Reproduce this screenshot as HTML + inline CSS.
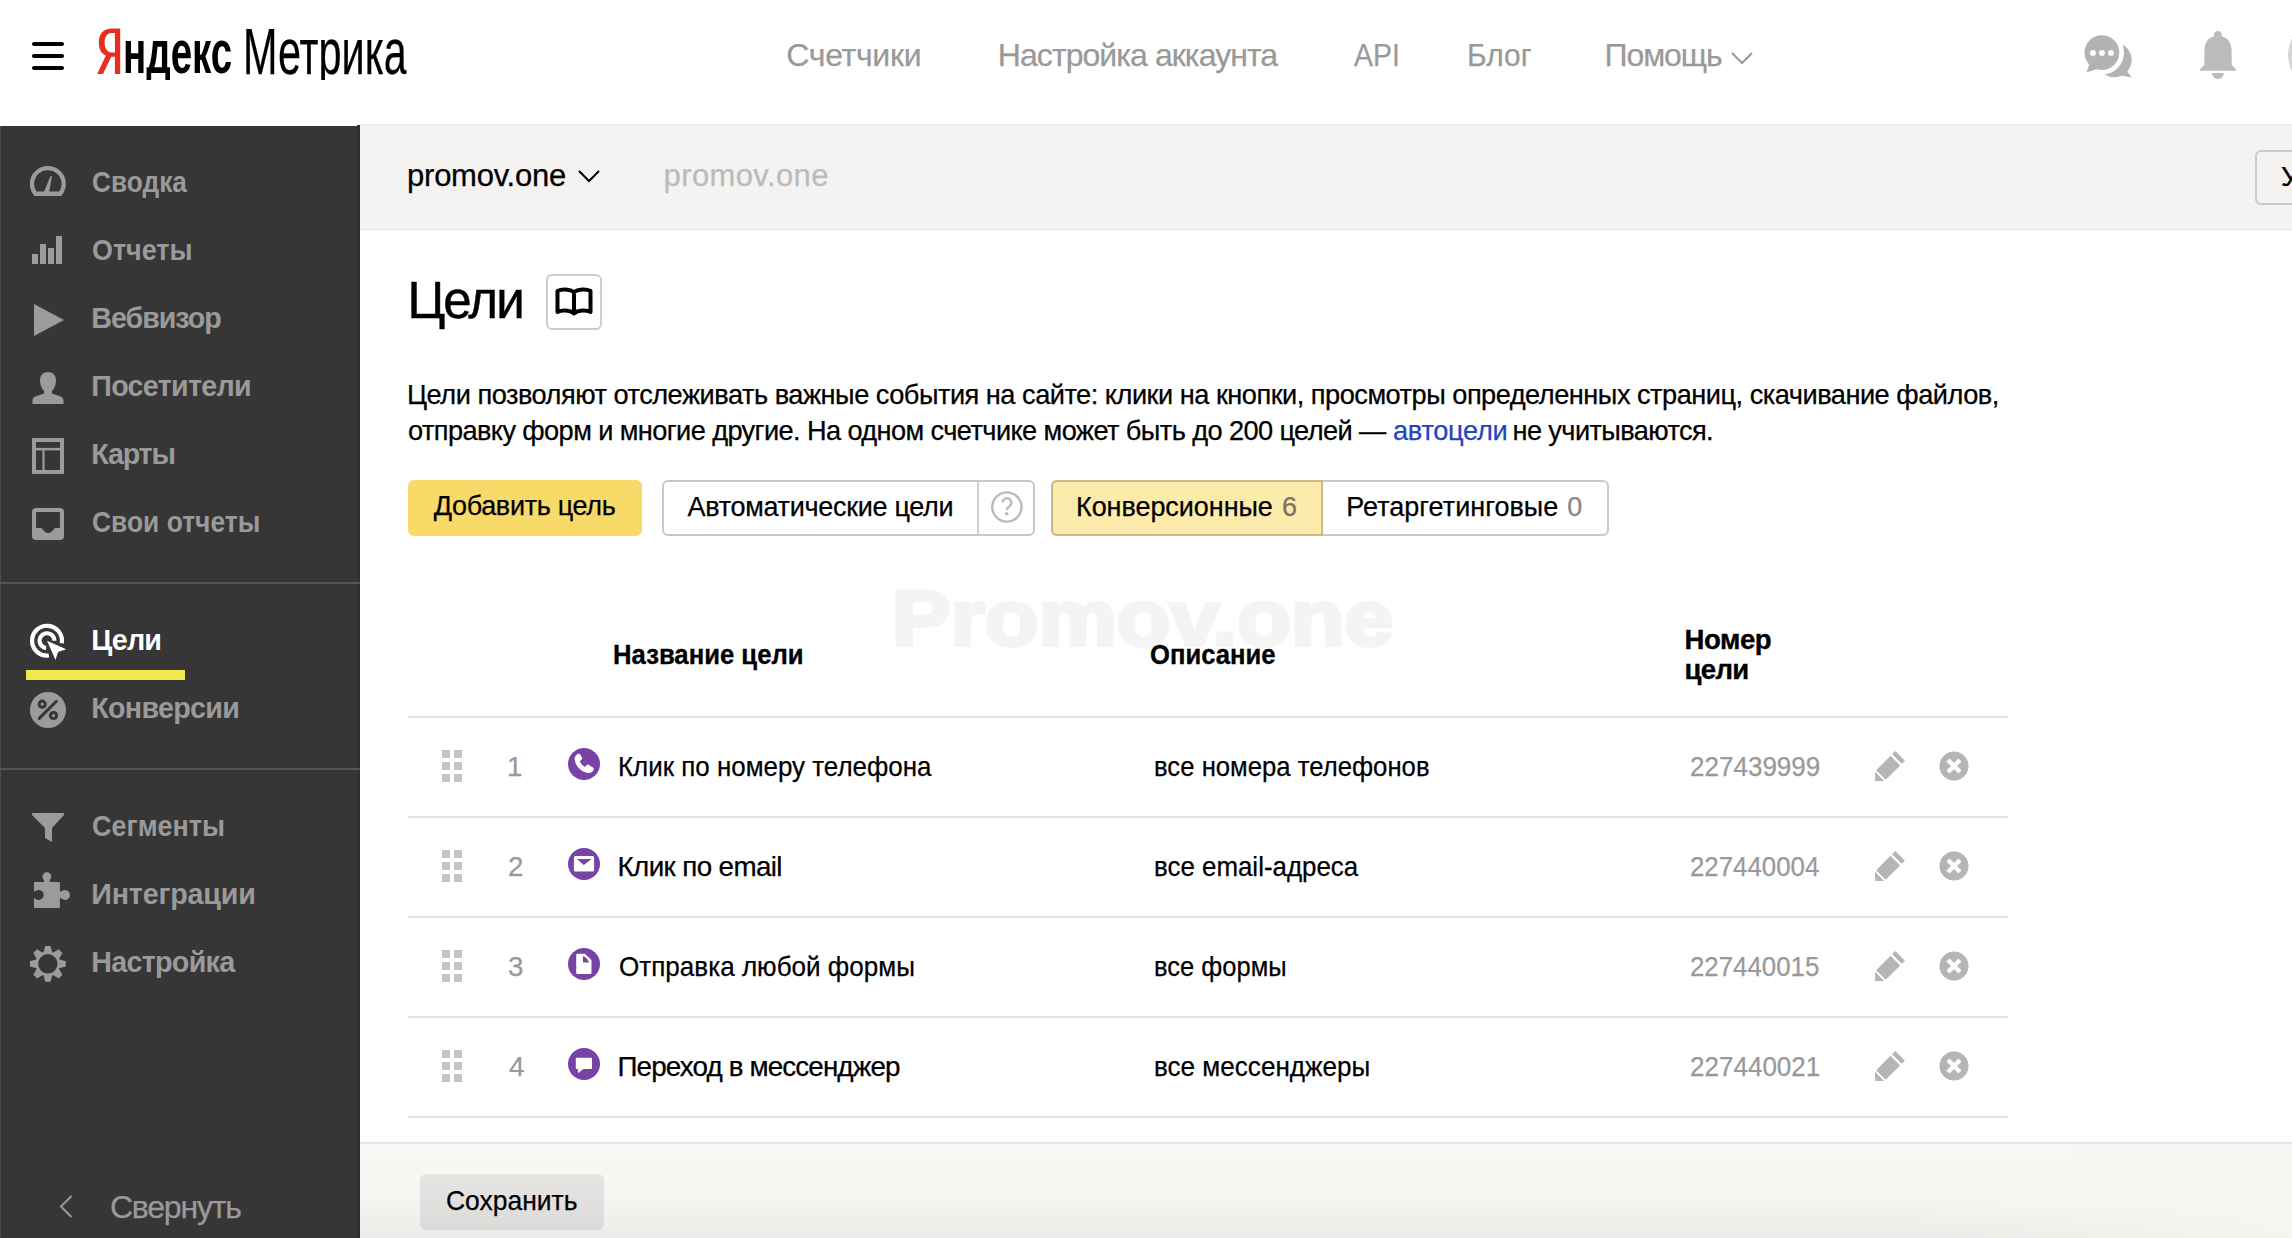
<!DOCTYPE html>
<html><head><meta charset="utf-8">
<style>
*{margin:0;padding:0;box-sizing:border-box}
html,body{width:2292px;height:1238px;overflow:hidden;background:#fff;font-family:"Liberation Sans",sans-serif;color:#000}
.a{position:absolute}
.t{position:absolute;white-space:nowrap;line-height:1;transform-origin:0 0}
svg{position:absolute;overflow:visible}
</style></head><body>
<div class="a" style="left:0;top:0;width:2292px;height:125px;background:#fff"></div>
<div class="a" style="left:0;top:126px;width:360px;height:1112px;background:#363636"></div>
<div class="a" style="left:360px;top:124px;width:1932px;height:106px;background:#f4f3f1;border-top:1px solid #ecebe8;border-bottom:1px solid #e8e7e4"></div>
<div class="a" style="left:360px;top:1142px;width:1932px;height:96px;background:linear-gradient(90deg,rgba(247,246,242,0) 80%,rgba(247,246,242,0.85) 100%),linear-gradient(#f8f7f3 0%,#f7f6f2 55%,#ebeae8 100%);border-top:2px solid #e6e5e2"></div>
<div class="a" style="left:32px;top:42px;width:32px;height:4px;border-radius:2px;background:#000"></div>
<div class="a" style="left:32px;top:54px;width:32px;height:4px;border-radius:2px;background:#000"></div>
<div class="a" style="left:32px;top:66px;width:32px;height:4px;border-radius:2px;background:#000"></div>
<svg style="left:0;top:0" width="130" height="80" viewBox="0 0 130 80"><path fill="#e52e1f" fill-rule="evenodd" d="M120.2 28.5 L120.2 74 L114.9 74 L114.9 56.8 L111.2 56.8 L103 74 L97.2 74 L105.9 55.6 C101.2 53.6 98.8 49.2 98.8 42.6 C98.8 33.2 104.2 28.5 111.5 28.5 Z M114.9 32.9 L111.6 32.9 C107.4 32.9 104.6 36.2 104.6 42.6 C104.6 49 107.4 52.4 111.6 52.4 L114.9 52.4 Z"/></svg>
<div class="t" style="left:123.08px;top:22.35px;font-size:61px;color:#000;font-weight:bold;transform:scaleX(0.6310);clip-path:inset(0 0 3.4px 0);">ндекс</div>
<div class="t" style="left:242.77px;top:19.81px;font-size:64px;color:#000;-webkit-text-stroke:0.25px currentColor;transform:scaleX(0.6466);clip-path:inset(0 0 3.8px 0);">Метрика</div>
<div class="t" style="left:786.30px;top:38.91px;font-size:32px;color:#999;-webkit-text-stroke:0.25px currentColor;letter-spacing:-0.29px;">Счетчики</div>
<div class="t" style="left:997.80px;top:38.91px;font-size:32px;color:#999;-webkit-text-stroke:0.25px currentColor;letter-spacing:-0.93px;">Настройка аккаунта</div>
<div class="t" style="left:1353.70px;top:38.91px;font-size:32px;color:#999;-webkit-text-stroke:0.25px currentColor;transform:scaleX(0.8878);">API</div>
<div class="t" style="left:1466.93px;top:38.91px;font-size:32px;color:#999;-webkit-text-stroke:0.25px currentColor;transform:scaleX(0.9358);">Блог</div>
<div class="t" style="left:1604.60px;top:38.91px;font-size:32px;color:#999;-webkit-text-stroke:0.25px currentColor;letter-spacing:-1.12px;">Помощь</div>
<svg style="left:1731px;top:52px" width="22" height="12" viewBox="0 0 22 12"><path d="M1 1 L11 11 L21 1" fill="none" stroke="#999" stroke-width="2"/></svg>
<svg style="left:2076px;top:26px" width="64" height="60" viewBox="0 0 64 60">
<circle cx="38.5" cy="34" r="17.2" fill="#b3b3b3"/>
<path d="M50 44 L55.9 51.6 L45 49.5 Z" fill="#b3b3b3"/>
<circle cx="25.9" cy="26.6" r="22.1" fill="#fff"/>
<circle cx="25.9" cy="26.6" r="17.4" fill="#b3b3b3"/>
<path d="M13.5 37.5 L10.6 45.9 C14.5 45.6 18 44.5 22 42.5 Z" fill="#b3b3b3"/>
<circle cx="17" cy="26.9" r="2.9" fill="#fff"/><circle cx="26" cy="26.9" r="2.9" fill="#fff"/><circle cx="34.9" cy="26.9" r="2.9" fill="#fff"/>
</svg>
<svg style="left:2190px;top:24px" width="56" height="62" viewBox="0 0 56 62">
<circle cx="27.9" cy="10.8" r="3.9" fill="#bbb"/>
<path d="M28 12 C19 12 14.8 17.5 14.4 26 L14.3 41.1 L10 45.3 L10 46.8 L45.8 46.8 L45.8 45.3 L41.7 41.1 L41.6 26 C41.2 17.5 37 12 28 12 Z" fill="#bbb"/>
<path d="M22 49.1 L33.8 49.1 A5.9 5.8 0 0 1 22 49.1 Z" fill="#bbb"/>
</svg>
<div class="a" style="left:2288px;top:17px;width:76px;height:76px;border-radius:50%;background:#d6d6d6"></div>
<div class="t" style="left:407.10px;top:159.85px;font-size:31px;color:#000;-webkit-text-stroke:0.25px currentColor;letter-spacing:-0.26px;">promov.one</div>
<svg style="left:578px;top:170px" width="22" height="12" viewBox="0 0 22 12"><path d="M1 1 L11 11 L21 1" fill="none" stroke="#000" stroke-width="2"/></svg>
<div class="t" style="left:663.60px;top:159.85px;font-size:31px;color:#bbb;-webkit-text-stroke:0.25px currentColor;letter-spacing:0.38px;">promov.one</div>
<div class="a" style="left:2255px;top:150px;width:60px;height:55px;border:2px solid #c9c9c9;border-radius:6px;background:transparent"></div>
<div class="t" style="left:2281.00px;top:161.57px;font-size:28.5px;color:#000;-webkit-text-stroke:0.25px currentColor;">У</div>
<div class="t" style="left:92.38px;top:167.80px;font-size:28.7px;color:#9a9a9a;font-weight:bold;transform:scaleX(0.9155);">Сводка</div>
<div class="t" style="left:92.36px;top:236.00px;font-size:28.7px;color:#9a9a9a;font-weight:bold;transform:scaleX(0.9381);">Отчеты</div>
<div class="t" style="left:91.30px;top:303.90px;font-size:28.7px;color:#9a9a9a;font-weight:bold;letter-spacing:-1.06px;">Вебвизор</div>
<div class="t" style="left:91.30px;top:371.50px;font-size:28.7px;color:#9a9a9a;font-weight:bold;letter-spacing:-0.72px;">Посетители</div>
<div class="t" style="left:91.30px;top:439.70px;font-size:28.7px;color:#9a9a9a;font-weight:bold;letter-spacing:-1.23px;">Карты</div>
<div class="t" style="left:92.38px;top:507.60px;font-size:28.7px;color:#9a9a9a;font-weight:bold;transform:scaleX(0.9206);">Свои отчеты</div>
<div class="t" style="left:91.30px;top:693.50px;font-size:28.7px;color:#9a9a9a;font-weight:bold;letter-spacing:-0.73px;">Конверсии</div>
<div class="t" style="left:92.36px;top:811.70px;font-size:28.7px;color:#9a9a9a;font-weight:bold;transform:scaleX(0.9388);">Сегменты</div>
<div class="t" style="left:91.30px;top:880.00px;font-size:28.7px;color:#9a9a9a;font-weight:bold;letter-spacing:-0.19px;">Интеграции</div>
<div class="t" style="left:91.30px;top:948.20px;font-size:28.7px;color:#9a9a9a;font-weight:bold;letter-spacing:-0.73px;">Настройка</div>
<div class="t" style="left:91.30px;top:625.70px;font-size:28.7px;color:#fff;font-weight:bold;letter-spacing:-0.83px;">Цели</div>
<div class="a" style="left:26px;top:670px;width:159px;height:10px;background:#f3e74f"></div>
<div class="a" style="left:0;top:582px;width:360px;height:2px;background:#555"></div>
<div class="a" style="left:0;top:768px;width:360px;height:2px;background:#555"></div>
<div class="a" style="left:0;top:126px;width:1px;height:1112px;background:#4c4c4c"></div>
<div class="a" style="left:357px;top:125px;width:3px;height:1113px;background:linear-gradient(90deg,#333,#2c2c2c)"></div>
<div class="a" style="left:0;top:582px;width:360px;height:2px;background:#555"></div>
<div class="a" style="left:0;top:768px;width:360px;height:2px;background:#555"></div>
<div class="t" style="left:109.90px;top:1190.91px;font-size:32px;color:#9a9a9a;-webkit-text-stroke:0.25px currentColor;letter-spacing:-1.19px;">Свернуть</div>
<svg style="left:59px;top:1195px" width="14" height="23" viewBox="0 0 14 23"><path d="M12.5 1 L2 11.5 L12.5 22" fill="none" stroke="#9a9a9a" stroke-width="2"/></svg>
<svg style="left:26px;top:160px" width="44" height="44" viewBox="0 0 44 44">
<path fill="#9b9b9b" fill-rule="evenodd" d="M8.45 35.9 A18 18 0 1 1 35.25 35.9 Z M10.52 31.6 A13.7 13.7 0 1 1 33.18 31.6 Z"/>
<path fill="#9b9b9b" d="M17.8 32.5 L23.1 32.5 L25.9 16.2 L24.4 16.2 Z"/>
</svg>
<svg style="left:31px;top:235px" width="32" height="30" viewBox="0 0 32 30">
<rect x="1" y="19" width="6" height="10" fill="#9b9b9b"/><rect x="9" y="9" width="6" height="20" fill="#9b9b9b"/>
<rect x="17" y="13" width="6" height="16" fill="#9b9b9b"/><rect x="25" y="1" width="6" height="28" fill="#9b9b9b"/>
</svg>
<svg style="left:34px;top:304px" width="30" height="32" viewBox="0 0 30 32"><path d="M0 0 L30 16 L0 32 Z" fill="#9b9b9b"/></svg>
<svg style="left:31px;top:371px" width="34" height="34" viewBox="0 0 34 34">
<path d="M17 1 C12 1 9 4.5 9 9.5 C9 14 11 18 13 20 L13 22.5 C8 24.5 2 25 1.5 29 L1.5 33 L32.5 33 L32.5 29 C32 25 26 24.5 21 22.5 L21 20 C23 18 25 14 25 9.5 C25 4.5 22 1 17 1 Z" fill="#9b9b9b"/>
</svg>
<svg style="left:31px;top:437px" width="34" height="38" viewBox="0 0 34 38">
<rect x="3" y="3" width="28" height="32" fill="none" stroke="#9b9b9b" stroke-width="4"/>
<rect x="3" y="10.9" width="28" height="2.5" fill="#9b9b9b"/><rect x="11.4" y="12" width="2.2" height="22" fill="#9b9b9b"/>
</svg>
<svg style="left:31px;top:507px" width="34" height="34" viewBox="0 0 34 34">
<path d="M5 1 L29 1 A4 4 0 0 1 33 5 L33 29 A4 4 0 0 1 29 33 L5 33 A4 4 0 0 1 1 29 L1 5 A4 4 0 0 1 5 1 Z M5.1 5.1 L5.1 20.9 L9.9 20.9 C11.9 21 12.9 25.9 17.2 25.9 C21.5 25.9 22.5 21 24.5 20.9 L28.9 20.9 L28.9 5.1 Z" fill="#9b9b9b" fill-rule="evenodd"/>
</svg>
<svg style="left:26px;top:618px" width="44" height="44" viewBox="0 0 44 44">
<path d="M35.73 25.24 A14.95 14.95 0 1 0 22.87 37.53" fill="none" stroke="#fff" stroke-width="4.2"/>
<path d="M28.45 22.7 A7.45 7.45 0 1 0 20.13 30.1" fill="none" stroke="#fff" stroke-width="4.2"/>
<path d="M21 22.7 L40.2 31.3 L32 34.1 L29.5 41.9 Z" fill="#fff" stroke="#363636" stroke-width="0" />
</svg>
<svg style="left:30px;top:692px" width="36" height="36" viewBox="0 0 36 36">
<circle cx="18" cy="18" r="18" fill="#9b9b9b"/>
<circle cx="12.2" cy="12.2" r="3.1" fill="none" stroke="#363636" stroke-width="3"/>
<circle cx="23.5" cy="23.5" r="3.1" fill="none" stroke="#363636" stroke-width="3"/>
<path d="M9.3 26.4 L26.4 9.3" stroke="#363636" stroke-width="3" stroke-linecap="round"/>
</svg>
<svg style="left:32px;top:813px" width="32" height="30" viewBox="0 0 32 30"><path d="M0 0 L32 0 L32 2 L20 15 L20 29 L13 25 L13 15 L0 2 Z" fill="#9b9b9b"/></svg>
<svg style="left:26px;top:866px" width="50" height="48" viewBox="0 0 50 48">
<path fill="#9b9b9b" d="M7.95 16.9 Q7.95 15.9 8.95 15.9 L17.8 15.9 L18.2 14.2 A4.46 4.46 0 1 1 23.6 14.2 L24 15.9 L32.9 15.9 Q33.9 15.9 33.9 16.9 L33.9 25.6 L35.6 25.2 A5 5 0 1 1 35.6 32.6 L33.9 32.2 L33.9 40.9 Q33.9 41.9 32.9 41.9 L8.95 41.9 Q7.95 41.9 7.95 40.9 L7.95 32.2 L9.5 32.7 A5 5 0 1 0 9.5 25.1 L7.95 25.6 Z"/>
</svg>
<svg style="left:26px;top:942px" width="44" height="44" viewBox="0 0 44 44">
<g fill="#9b9b9b"><polygon points="17.35,10.85 26.35,10.85 24.5,3.95 19.2,3.95" transform="rotate(0 21.85 21.85)"/><polygon points="17.35,10.85 26.35,10.85 24.5,3.95 19.2,3.95" transform="rotate(45 21.85 21.85)"/><polygon points="17.35,10.85 26.35,10.85 24.5,3.95 19.2,3.95" transform="rotate(90 21.85 21.85)"/><polygon points="17.35,10.85 26.35,10.85 24.5,3.95 19.2,3.95" transform="rotate(135 21.85 21.85)"/><polygon points="17.35,10.85 26.35,10.85 24.5,3.95 19.2,3.95" transform="rotate(180 21.85 21.85)"/><polygon points="17.35,10.85 26.35,10.85 24.5,3.95 19.2,3.95" transform="rotate(225 21.85 21.85)"/><polygon points="17.35,10.85 26.35,10.85 24.5,3.95 19.2,3.95" transform="rotate(270 21.85 21.85)"/><polygon points="17.35,10.85 26.35,10.85 24.5,3.95 19.2,3.95" transform="rotate(315 21.85 21.85)"/></g>
<circle cx="21.85" cy="21.85" r="11.05" fill="none" stroke="#9b9b9b" stroke-width="2.6"/>
</svg>
<div class="t" style="left:407.40px;top:274.62px;font-size:51px;color:#000;-webkit-text-stroke:0.25px currentColor;letter-spacing:-1.77px;-webkit-text-stroke:0.5px #000;">Цели</div>
<div class="a" style="left:546px;top:274px;width:56px;height:56px;border:2px solid #ccc;border-radius:6px"></div>
<svg style="left:555px;top:287px" width="38" height="30" viewBox="0 0 38 30">
<path d="M19 5 C15 2 7 1.5 2.5 4 L2.5 25 C7 22.5 15 23 19 26.5 C23 23 31 22.5 35.5 25 L35.5 4 C31 1.5 23 2 19 5 Z M19 5 L19 26.5" fill="none" stroke="#000" stroke-width="4" stroke-linejoin="round"/>
</svg>
<div class="t" style="left:407.00px;top:380.77px;font-size:27.2px;color:#000;-webkit-text-stroke:0.25px currentColor;letter-spacing:-0.50px;">Цели позволяют отслеживать важные события на сайте: клики на кнопки, просмотры определенных страниц, скачивание файлов,</div>
<div class="t" style="left:408.00px;top:416.57px;font-size:27.2px;color:#000;-webkit-text-stroke:0.25px currentColor;letter-spacing:-0.60px;">отправку форм и многие другие. На одном счетчике может быть до 200 целей —</div>
<div class="t" style="left:1393.00px;top:416.57px;font-size:27.2px;color:#1f45c2;-webkit-text-stroke:0.25px currentColor;letter-spacing:-0.29px;">автоцели</div>
<div class="t" style="left:1512.50px;top:416.57px;font-size:27.2px;color:#000;-webkit-text-stroke:0.25px currentColor;letter-spacing:-0.61px;">не учитываются.</div>
<div class="a" style="left:408px;top:480px;width:234px;height:56px;background:#f8da68;border-radius:6px"></div>
<div class="t" style="left:433.70px;top:492.94px;font-size:27px;color:#000;-webkit-text-stroke:0.25px currentColor;letter-spacing:-0.32px;">Добавить цель</div>
<div class="a" style="left:662px;top:480px;width:373px;height:56px;border:2px solid #c9c9c9;border-radius:6px;background:#fff"></div>
<div class="a" style="left:976.5px;top:482px;width:2px;height:52px;background:#d0d0d0"></div>
<div class="t" style="left:687.50px;top:493.74px;font-size:27px;color:#000;-webkit-text-stroke:0.25px currentColor;letter-spacing:-0.29px;">Автоматические цели</div>
<svg style="left:990px;top:491px" width="34" height="34" viewBox="0 0 34 34"><circle cx="16.9" cy="16" r="14.6" fill="none" stroke="#bbb" stroke-width="2.4"/><path d="M12.5 11.6 A4.4 4.3 0 1 1 19.6 15 C17.6 16.4 16.7 17.1 16.7 19.3" fill="none" stroke="#bbb" stroke-width="2.5"/><circle cx="16.7" cy="22.8" r="1.8" fill="#bbb"/></svg>
<div class="a" style="left:1051px;top:480px;width:558px;height:56px;border:2px solid #c9c9c9;border-radius:6px;background:#fff"></div>
<div class="a" style="left:1051px;top:480px;width:272px;height:56px;border:2px solid #c9b98a;border-right:none;border-radius:6px 0 0 6px;background:#fcebab"></div>
<div class="a" style="left:1321px;top:480px;width:2px;height:56px;background:#c9b98a"></div>
<div class="t" style="left:1076.00px;top:493.74px;font-size:27px;color:#000;-webkit-text-stroke:0.25px currentColor;letter-spacing:-0.06px;">Конверсионные</div>
<div class="t" style="left:1282.00px;top:493.74px;font-size:27px;color:#7a745e;-webkit-text-stroke:0.25px currentColor;letter-spacing:0.00px;">6</div>
<div class="t" style="left:1346.20px;top:493.74px;font-size:27px;color:#000;-webkit-text-stroke:0.25px currentColor;letter-spacing:0.02px;">Ретаргетинговые</div>
<div class="t" style="left:1567.30px;top:493.74px;font-size:27px;color:#888;-webkit-text-stroke:0.25px currentColor;letter-spacing:-0.80px;">0</div>
<div class="t" style="left:892.09px;top:579.80px;font-size:77px;color:#f4f4f4;font-weight:bold;transform:scaleX(1.1412);-webkit-text-stroke:4px #f4f4f4;">Promov.one</div>
<div class="t" style="left:613.04px;top:640.83px;font-size:27.6px;color:#000;font-weight:bold;transform:scaleX(0.9308);-webkit-text-stroke:0.35px #000;">Название цели</div>
<div class="t" style="left:1149.97px;top:640.63px;font-size:27.6px;color:#000;font-weight:bold;transform:scaleX(0.9284);-webkit-text-stroke:0.35px #000;">Описание</div>
<div class="t" style="left:1684.50px;top:626.33px;font-size:27.6px;color:#000;font-weight:bold;letter-spacing:-0.48px;-webkit-text-stroke:0.35px #000;">Номер</div>
<div class="t" style="left:1684.50px;top:656.23px;font-size:27.6px;color:#000;font-weight:bold;letter-spacing:-0.67px;-webkit-text-stroke:0.35px #000;">цели</div>
<div class="a" style="left:408px;top:716px;width:1600px;height:2px;background:#e4e4e4"></div>
<div class="a" style="left:442px;top:750px;width:8px;height:8px;background:#c4c4c4"></div>
<div class="a" style="left:454px;top:750px;width:8px;height:8px;background:#c4c4c4"></div>
<div class="a" style="left:442px;top:762px;width:8px;height:8px;background:#c4c4c4"></div>
<div class="a" style="left:454px;top:762px;width:8px;height:8px;background:#c4c4c4"></div>
<div class="a" style="left:442px;top:774px;width:8px;height:8px;background:#c4c4c4"></div>
<div class="a" style="left:454px;top:774px;width:8px;height:8px;background:#c4c4c4"></div>
<div class="t" style="left:507.00px;top:752.66px;font-size:27.8px;color:#999;-webkit-text-stroke:0.25px currentColor;">1</div>
<svg style="left:568px;top:748px" width="32" height="32" viewBox="0 0 32 32"><circle cx="16" cy="16" r="16" fill="#7743a4"/><path fill="#fff" d="M9.6 6.1 C10.6 5.5 11.8 5.8 12.5 6.8 L14 9.8 C14.4 10.6 14.1 11.4 13.4 11.9 L11.8 12.9 C12.6 15.6 14.7 17.8 17.3 18.9 L18.4 17.3 C18.9 16.6 19.7 16.4 20.4 16.8 L24.9 19.4 C25.9 20 26.2 21.1 25.6 22.1 C24.6 23.9 22.6 25.4 20.1 25.1 C13.1 24.1 7.4 18.1 6.7 11.5 C6.4 9.2 7.8 7.3 9.6 6.1 Z"/></svg>
<div class="t" style="left:617.63px;top:752.66px;font-size:27.8px;color:#000;-webkit-text-stroke:0.25px currentColor;transform:scaleX(0.9331);">Клик по номеру телефона</div>
<div class="t" style="left:1154.48px;top:752.66px;font-size:27.8px;color:#000;-webkit-text-stroke:0.25px currentColor;transform:scaleX(0.9243);">все номера телефонов</div>
<div class="t" style="left:1690.16px;top:752.66px;font-size:27.8px;color:#999;-webkit-text-stroke:0.25px currentColor;transform:scaleX(0.9365);">227439999</div>
<svg style="left:1874px;top:750px" width="32" height="32" viewBox="0 0 30 30">
<path d="M20 1 L29 10 L26 13 L17 4 Z" fill="#b5b5b5"/><path d="M15.5 5.5 L24.5 14.5 L11 28 L2 19 Z" fill="#b5b5b5"/><path d="M1 20.5 L9.5 29 L1 29 Z" fill="#b5b5b5"/>
</svg>
<svg style="left:1939px;top:751px" width="30" height="30" viewBox="0 0 30 30">
<circle cx="15" cy="15" r="14.5" fill="#b5b5b5"/><path d="M9 9 L21 21 M21 9 L9 21" stroke="#fff" stroke-width="4.4"/>
</svg>
<div class="a" style="left:408px;top:816px;width:1600px;height:2px;background:#e4e4e4"></div>
<div class="a" style="left:442px;top:850px;width:8px;height:8px;background:#c4c4c4"></div>
<div class="a" style="left:454px;top:850px;width:8px;height:8px;background:#c4c4c4"></div>
<div class="a" style="left:442px;top:862px;width:8px;height:8px;background:#c4c4c4"></div>
<div class="a" style="left:454px;top:862px;width:8px;height:8px;background:#c4c4c4"></div>
<div class="a" style="left:442px;top:874px;width:8px;height:8px;background:#c4c4c4"></div>
<div class="a" style="left:454px;top:874px;width:8px;height:8px;background:#c4c4c4"></div>
<div class="t" style="left:508.00px;top:852.66px;font-size:27.8px;color:#999;-webkit-text-stroke:0.25px currentColor;">2</div>
<svg style="left:568px;top:848px" width="32" height="32" viewBox="0 0 32 32"><circle cx="16" cy="16" r="16" fill="#7743a4"/><path fill="#fff" fill-rule="evenodd" d="M7.4 8 L24.6 8 A1.5 1.5 0 0 1 26.1 9.5 L26.1 22 A1.5 1.5 0 0 1 24.6 23.5 L7.4 23.5 A1.5 1.5 0 0 1 5.9 22 L5.9 9.5 A1.5 1.5 0 0 1 7.4 8 Z M8.9 11 L23.6 11 L15.8 17 Z"/></svg>
<div class="t" style="left:617.50px;top:852.66px;font-size:27.8px;color:#000;-webkit-text-stroke:0.25px currentColor;letter-spacing:-0.62px;">Клик по email</div>
<div class="t" style="left:1154.47px;top:852.66px;font-size:27.8px;color:#000;-webkit-text-stroke:0.25px currentColor;transform:scaleX(0.9315);">все email-адреса</div>
<div class="t" style="left:1690.17px;top:852.66px;font-size:27.8px;color:#999;-webkit-text-stroke:0.25px currentColor;transform:scaleX(0.9297);">227440004</div>
<svg style="left:1874px;top:850px" width="32" height="32" viewBox="0 0 30 30">
<path d="M20 1 L29 10 L26 13 L17 4 Z" fill="#b5b5b5"/><path d="M15.5 5.5 L24.5 14.5 L11 28 L2 19 Z" fill="#b5b5b5"/><path d="M1 20.5 L9.5 29 L1 29 Z" fill="#b5b5b5"/>
</svg>
<svg style="left:1939px;top:851px" width="30" height="30" viewBox="0 0 30 30">
<circle cx="15" cy="15" r="14.5" fill="#b5b5b5"/><path d="M9 9 L21 21 M21 9 L9 21" stroke="#fff" stroke-width="4.4"/>
</svg>
<div class="a" style="left:408px;top:916px;width:1600px;height:2px;background:#e4e4e4"></div>
<div class="a" style="left:442px;top:950px;width:8px;height:8px;background:#c4c4c4"></div>
<div class="a" style="left:454px;top:950px;width:8px;height:8px;background:#c4c4c4"></div>
<div class="a" style="left:442px;top:962px;width:8px;height:8px;background:#c4c4c4"></div>
<div class="a" style="left:454px;top:962px;width:8px;height:8px;background:#c4c4c4"></div>
<div class="a" style="left:442px;top:974px;width:8px;height:8px;background:#c4c4c4"></div>
<div class="a" style="left:454px;top:974px;width:8px;height:8px;background:#c4c4c4"></div>
<div class="t" style="left:508.00px;top:952.66px;font-size:27.8px;color:#999;-webkit-text-stroke:0.25px currentColor;">3</div>
<svg style="left:568px;top:948px" width="32" height="32" viewBox="0 0 32 32"><circle cx="16" cy="16" r="16" fill="#7743a4"/><path fill="#fff" fill-rule="evenodd" d="M9.3 5.7 L16.9 5.7 L23.5 12 L23.5 25 A1.1 1.1 0 0 1 22.4 26.1 L9.3 26.1 A1.1 1.1 0 0 1 8.2 25 L8.2 6.8 A1.1 1.1 0 0 1 9.3 5.7 Z M14.9 8.3 L14.9 13.8 A0.8 0.8 0 0 0 15.7 14.6 L20.9 14.6 C20.5 12 17.5 8.8 14.9 8.3 Z"/></svg>
<div class="t" style="left:618.56px;top:952.66px;font-size:27.8px;color:#000;-webkit-text-stroke:0.25px currentColor;transform:scaleX(0.9377);">Отправка любой формы</div>
<div class="t" style="left:1154.48px;top:952.66px;font-size:27.8px;color:#000;-webkit-text-stroke:0.25px currentColor;transform:scaleX(0.9183);">все формы</div>
<div class="t" style="left:1690.17px;top:952.66px;font-size:27.8px;color:#999;-webkit-text-stroke:0.25px currentColor;transform:scaleX(0.9297);">227440015</div>
<svg style="left:1874px;top:950px" width="32" height="32" viewBox="0 0 30 30">
<path d="M20 1 L29 10 L26 13 L17 4 Z" fill="#b5b5b5"/><path d="M15.5 5.5 L24.5 14.5 L11 28 L2 19 Z" fill="#b5b5b5"/><path d="M1 20.5 L9.5 29 L1 29 Z" fill="#b5b5b5"/>
</svg>
<svg style="left:1939px;top:951px" width="30" height="30" viewBox="0 0 30 30">
<circle cx="15" cy="15" r="14.5" fill="#b5b5b5"/><path d="M9 9 L21 21 M21 9 L9 21" stroke="#fff" stroke-width="4.4"/>
</svg>
<div class="a" style="left:408px;top:1016px;width:1600px;height:2px;background:#e4e4e4"></div>
<div class="a" style="left:442px;top:1050px;width:8px;height:8px;background:#c4c4c4"></div>
<div class="a" style="left:454px;top:1050px;width:8px;height:8px;background:#c4c4c4"></div>
<div class="a" style="left:442px;top:1062px;width:8px;height:8px;background:#c4c4c4"></div>
<div class="a" style="left:454px;top:1062px;width:8px;height:8px;background:#c4c4c4"></div>
<div class="a" style="left:442px;top:1074px;width:8px;height:8px;background:#c4c4c4"></div>
<div class="a" style="left:454px;top:1074px;width:8px;height:8px;background:#c4c4c4"></div>
<div class="t" style="left:509.00px;top:1052.66px;font-size:27.8px;color:#999;-webkit-text-stroke:0.25px currentColor;">4</div>
<svg style="left:568px;top:1048px" width="32" height="32" viewBox="0 0 32 32"><circle cx="16" cy="16" r="16" fill="#7743a4"/><path fill="#fff" d="M8.8 9.8 L23 9.8 A1 1 0 0 1 24 10.8 L24 20.1 A1 1 0 0 1 23 21.1 L15.3 21.1 L10.1 25.3 L9.7 21.1 L8.8 21.1 A1 1 0 0 1 7.8 20.1 L7.8 10.8 A1 1 0 0 1 8.8 9.8 Z"/></svg>
<div class="t" style="left:617.50px;top:1052.66px;font-size:27.8px;color:#000;-webkit-text-stroke:0.25px currentColor;letter-spacing:-0.87px;">Переход в мессенджер</div>
<div class="t" style="left:1154.46px;top:1052.66px;font-size:27.8px;color:#000;-webkit-text-stroke:0.25px currentColor;transform:scaleX(0.9386);">все мессенджеры</div>
<div class="t" style="left:1690.16px;top:1052.66px;font-size:27.8px;color:#999;-webkit-text-stroke:0.25px currentColor;transform:scaleX(0.9365);">227440021</div>
<svg style="left:1874px;top:1050px" width="32" height="32" viewBox="0 0 30 30">
<path d="M20 1 L29 10 L26 13 L17 4 Z" fill="#b5b5b5"/><path d="M15.5 5.5 L24.5 14.5 L11 28 L2 19 Z" fill="#b5b5b5"/><path d="M1 20.5 L9.5 29 L1 29 Z" fill="#b5b5b5"/>
</svg>
<svg style="left:1939px;top:1051px" width="30" height="30" viewBox="0 0 30 30">
<circle cx="15" cy="15" r="14.5" fill="#b5b5b5"/><path d="M9 9 L21 21 M21 9 L9 21" stroke="#fff" stroke-width="4.4"/>
</svg>
<div class="a" style="left:408px;top:1116px;width:1600px;height:2px;background:#e4e4e4"></div>
<div class="a" style="left:420px;top:1174px;width:184px;height:56px;border-radius:6px;background:linear-gradient(#e6e5e3,#dcdbd9)"></div>
<div class="t" style="left:445.67px;top:1185.87px;font-size:28.5px;color:#000;-webkit-text-stroke:0.25px currentColor;transform:scaleX(0.9286);">Сохранить</div>
</body></html>
